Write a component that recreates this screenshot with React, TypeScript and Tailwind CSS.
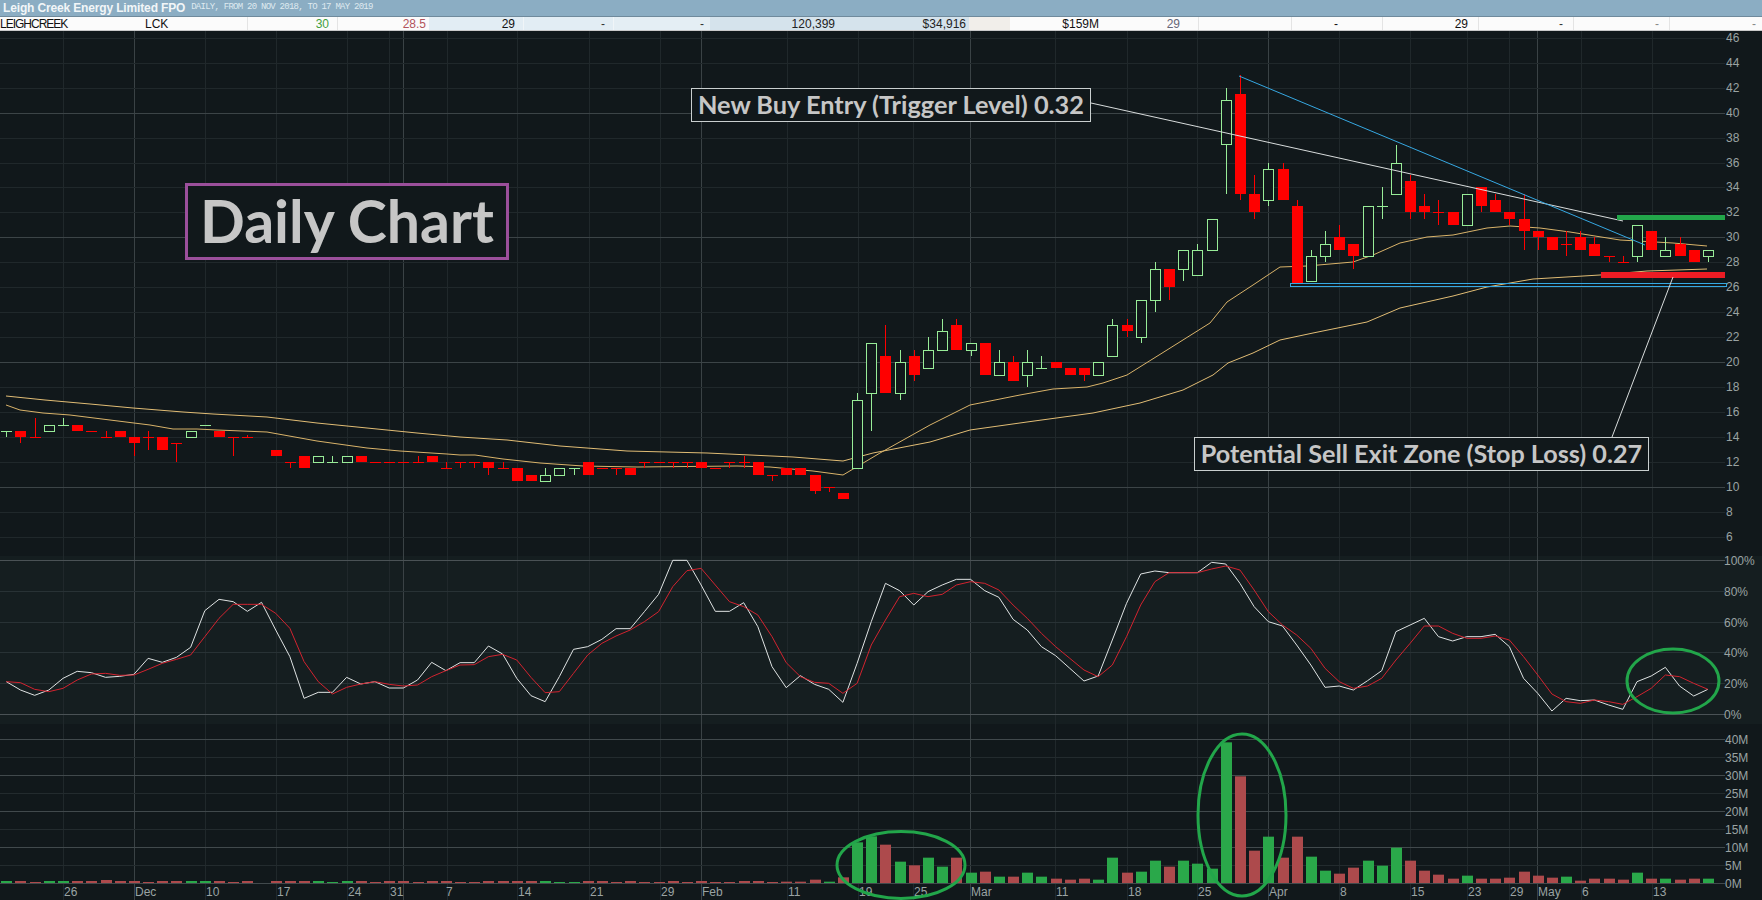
import React from 'react';

type Candle = { up: boolean; t: number; b: number; h: number; l: number } | null;

const g = (t: number, b: number, h = t, l = b): Candle => ({ up: true, t, b, h, l });
const r = (t: number, b: number, h = t, l = b): Candle => ({ up: false, t, b, h, l });

// top of body, bottom of body, high, low (in cents)
const candles: Candle[] = [
  g(14.5, 14.5, 14.5, 14), r(14.5, 14, 14.5, 13.5), r(14, 14, 15.5, 14), g(15, 14.5), g(15, 15, 15.5, 15), r(15, 14.5),
  r(14.5, 14.5), r(14, 14, 14.5, 14), r(14.5, 14), r(14, 13.5, 14, 12.5), r(14, 14, 14.5, 13), r(14, 13),
  r(13.5, 13.5, 13.5, 12), g(14.5, 14), g(15, 15), r(14.5, 14), r(14, 14, 14, 12.5), r(14, 14, 14.2, 14),
  null, r(13, 12.5), r(12, 12, 12, 11.5), r(12.5, 11.5), g(12.5, 12), g(12, 12, 12.5, 12),
  g(12.5, 12), r(12.5, 12), r(12, 12), r(12, 12), r(12, 12), r(12, 12, 12.5, 12),
  r(12.5, 12), r(11.5, 11.5, 12, 11.5), r(12, 12, 12, 11.5), r(12, 12, 12, 11.5), r(12, 11.5, 12, 11), r(11.5, 11.5, 12, 11.5),
  r(11.5, 10.5), r(11, 10.5), g(11, 10.5, 11.5, 10.5), g(11.5, 11), g(11.5, 11.5, 11.5, 11), r(12, 11),
  r(11.5, 11.5), r(11.5, 11.5, 11.5, 11), r(11.5, 11), r(12, 12, 12, 11.5), r(12, 12), r(12, 12, 12, 11.5),
  r(12, 12, 12, 11.5), r(12, 11.5), r(11.5, 11.5), r(12, 12, 12, 11.5), r(12, 12, 12.5, 11.5), r(12, 11),
  r(11, 11, 11, 10.5), r(11.5, 11), r(11.5, 11), r(11, 9.7, 11, 9.4), r(10, 10, 10, 9.6), r(9.5, 9),
  g(17, 11.5, 17.5, 11.5), g(21.5, 17.5, 21.5, 14.5), r(20.5, 17.5, 23, 17.5), g(20, 17.5, 21, 17), r(20.5, 19, 21, 18.5), g(21, 19.5, 22, 19.5),
  g(22.5, 21, 23.5, 21), r(23, 21, 23.5, 21), g(21.5, 21, 21.5, 20.5), r(21.5, 19), g(20, 19, 21, 19), r(20, 18.5, 20.5, 18.5),
  g(20, 19, 21, 18), g(19.5, 19.5, 20.5, 19.5), r(20, 19.5), r(19.5, 19), r(19.5, 19, 19.5, 18.5), g(20, 19),
  g(23, 20.5, 23.5, 20.5), r(23, 22.5, 23.5, 22), g(25, 22, 25, 21.5), g(27.5, 25, 28, 24), r(27.5, 26, 27.5, 25), g(29, 27.5, 29, 26.5),
  g(29, 27, 29.5, 27), g(31.5, 29), g(41, 37.5, 42, 33.5), r(41.5, 33.5, 43, 33), r(33.5, 32, 35, 31.5), g(35.5, 33, 36, 32.5),
  r(35.5, 33, 36, 33), r(32.5, 26.3, 33, 26.3), g(28.5, 26.5, 29, 26.5), g(29.5, 28.5, 30.5, 28), r(30, 29, 31, 29), r(29.5, 28.5, 29.5, 27.5),
  g(32.5, 28.5), g(32.5, 32.5, 34, 31.5), g(36, 33.5, 37.4, 33.5), r(34.5, 32, 35, 31.5), r(32.5, 32, 33.5, 31.5), r(32, 32, 33, 31),
  r(32, 31), g(33.5, 31), r(34, 32.5, 34, 32), r(33, 32, 33.5, 32), r(32, 31.5, 32, 31), r(31.5, 30.5, 33.5, 29),
  r(30.5, 30, 30.5, 29), r(30, 29), r(29.5, 29.5, 30.5, 28.5), r(30, 29, 30.5, 29), r(29.5, 28.5, 30, 28.5), r(28.5, 28.5, 28.5, 28),
  r(28, 28, 28.5, 28), g(31, 28.5, 31, 28), r(30.5, 29), g(29, 28.5, 30, 28.5), r(29.5, 28.5, 30, 28.5), r(29, 28),
  g(29, 28.5, 29, 28),
];

const cx = (i: number) => Math.round(6.3 + 14.18 * i);
const py = (p: number) => Math.round(487 - (p - 10) * 12.48);

const slowMA: [number, number][] = [
  [6, 396], [45, 400], [90, 404], [133, 408], [183, 412], [213, 414], [267, 417], [317, 423], [367, 428], [417, 433],
  [460, 437], [507, 440], [560, 446], [627, 451], [707, 453], [793, 457], [843, 461], [873, 453], [930, 442], [970, 430],
  [1027, 422], [1093, 413], [1140, 403], [1183, 390], [1213, 375], [1228, 363], [1253, 353], [1280, 340], [1313, 333],
  [1367, 322], [1400, 308], [1453, 296], [1487, 287], [1533, 279], [1600, 275], [1647, 271], [1707, 269],
];
const fastMA: [number, number][] = [
  [6, 405], [20, 410], [43, 413], [70, 415], [110, 420], [150, 425], [173, 429], [197, 429], [217, 430], [267, 432],
  [317, 441], [367, 448], [400, 451], [447, 454], [460, 455], [475, 455], [503, 459], [540, 463], [583, 466], [637, 467],
  [737, 466], [770, 467], [813, 471], [843, 475], [880, 453], [930, 425], [970, 405], [1020, 395], [1053, 389], [1087, 387],
  [1103, 383], [1127, 375], [1167, 350], [1210, 323], [1227, 302], [1253, 285], [1280, 267], [1307, 266], [1353, 262],
  [1373, 255], [1400, 243], [1427, 237], [1453, 235], [1487, 228], [1510, 226], [1540, 228], [1570, 232], [1620, 240],
  [1673, 243], [1707, 246],
];

// stochastic pane, raw offsets below y=550 (x3)
const stochK = [
  395, 420, 436, 420, 385, 364, 368, 382, 379, 373, 325, 337, 322, 292, 182, 148, 155, 184, 157, 240, 320, 445, 427, 427, 382,
  402, 395, 414, 414, 390, 337, 362, 338, 338, 288, 312, 385, 437, 455, 380, 298, 290, 268, 236, 236, 185, 133, 31, 31, 105,
  184, 184, 158, 230, 350, 413, 377, 403, 418, 457, 340, 215, 100, 122, 165, 125, 105, 88, 88, 122, 142, 208, 240, 290, 317,
  355, 393, 378, 270, 160, 72, 63, 68, 68, 68, 37, 42, 100, 170, 215, 228, 285, 345, 412, 408, 420, 392, 362, 245, 225, 205,
  260, 273, 260, 260, 253, 290, 385, 430, 483, 445, 452, 450, 465, 478, 395, 378, 352, 408, 438, 418,
];
const stochD = [
  395, 398, 418, 425, 415, 390, 372, 370, 376, 375, 358, 340, 328, 315, 260, 205, 163, 163, 163, 190, 235, 335, 395, 432, 412,
  402, 395, 403, 408, 405, 380, 362, 345, 344, 320, 313, 330, 382, 428, 425, 370, 315, 280, 258, 240, 215, 185, 110, 62, 55,
  105, 155, 170, 195, 260, 338, 380, 397, 400, 430, 400, 285, 210, 140, 130, 140, 133, 105, 95, 100, 120, 165, 205, 250, 290,
  325, 360, 380, 345, 260, 165, 95, 68, 68, 68, 57, 48, 60, 120, 185, 225, 255, 295, 355, 395, 415, 408, 385, 330, 280, 228,
  228, 250, 265, 265, 258, 270, 320, 375, 432, 455, 460, 450, 455, 463, 440, 415, 375, 380, 400, 418,
];

// volume: first 55 bars are px heights, the rest are read off as bar tops (x3)
const lowVol = [
  2, 2, 1, 2, 2, 2, 2, 3, 2, 2, 1, 2, 2, 2, 2, 2, 1, 2, 0, 2, 2, 2, 2, 1, 2, 2, 1, 2, 2, 1, 2, 2, 1, 1, 2, 2, 2, 2, 2, 1, 1, 2,
  2, 1, 2, 1, 1, 2, 1, 2, 1, 1, 2, 2, 1,
];
const volTops = [
  486, 486, 480, 486, 473, 368, 350, 375, 426, 437, 414, 441, 414, 459, 456, 471, 471, 459, 471, 477, 480, 477, 480, 414, 459,
  456, 423, 441, 423, 432, 447, 68, 170, 393, 351, 414, 351, 411, 453, 462, 444, 423, 438, 384, 423, 453, 465, 477, 468, 477,
  477, 474, 456, 468, 474, 471, 483, 477, 477, 480, 459, 477, 477, 480, 477, 477,
];
const volHeights = [...lowVol, ...volTops.map((t) => (490 - t) / 3)];
const volUp = (i: number) => {
  if (i === 58 || i === 77 || i === 85 || i === 110) return true;
  if (i === 59 || i === 67 || i === 90 || i === 91) return false;
  if (i === 55 || i === 56 || i === 57 || i === 66) return i === 66;
  return candles[i]?.up ?? false;
};

const majorX = [134.5, 403.5, 701.5, 970.5, 1268.5, 1537.5];
const minorX = [63.5, 205.5, 276.5, 347.5, 389.5, 447.5, 517.5, 589.5, 660.5, 787.5, 858.5, 913.5, 1055.5, 1127.5, 1197.5, 1339.5, 1410.5, 1467.5, 1509.5, 1581.5, 1652.5];

const dates: [string, number][] = [
  ['26', 63], ['Dec', 134], ['10', 205], ['17', 276], ['24', 347], ['31', 389], ['7', 445], ['14', 517], ['21', 589], ['29', 660],
  ['Feb', 701], ['11', 787], ['19', 858], ['25', 913], ['Mar', 970], ['11', 1055], ['18', 1127], ['25', 1197], ['Apr', 1268],
  ['8', 1339], ['15', 1410], ['23', 1467], ['29', 1509], ['May', 1537], ['6', 1581], ['13', 1652],
];

const prices = Array.from({ length: 21 }, (_, i) => 46 - i * 2);
const pcts = [100, 80, 60, 40, 20, 0];
const vols = [40, 35, 30, 25, 20, 15, 10, 5, 0];
const sy = (s: number) => Math.round(714 - 1.54 * s) + 0.5;
const vy = (m: number) => Math.round(883 - 3.6 * m) + 0.5;

const toPts = (a: number[]) => a.map((v, i) => `${6.3 + 14.18 * i},${550 + v / 3}`).join(' ');
const maPts = (a: [number, number][]) => a.map((p) => p.join(',')).join(' ');

const cells = [
  { w: 145, text: 'LEIGHCREEK', cls: 'justify-start text-[11px] tracking-[-1px] text-[#111] bg-[#fbfbfb]' },
  { w: 103, text: 'LCK', cls: 'justify-start text-[#111] bg-[#fbfbfb] border-r border-[#e4e4e4]' },
  { w: 90, text: '30', cls: 'justify-end pr-[8px] text-[#3f9f3f] bg-[#fbfbfb] border-r border-[#e4e4e4]' },
  { w: 91, text: '28.5', cls: 'justify-end pr-[3px] text-[#b2545c] bg-[#fbfbfb]' },
  { w: 95, text: '29', cls: 'justify-end pr-[8px] text-[#111] bg-[#e2edf4] border-r border-[#f0f5f8]' },
  { w: 90, text: '-', cls: 'justify-end pr-[8px] text-[#333] bg-[#e2edf4] border-r border-[#f0f5f8]' },
  { w: 96, text: '-', cls: 'justify-end pr-[6px] text-[#333] bg-[#e4eef4]' },
  { w: 135, text: '120,399', cls: 'justify-end pr-[10px] text-[#222] bg-[#d5e3ec]' },
  { w: 124, text: '$34,916', cls: 'justify-end pr-[3px] text-[#222] bg-[#d5e3ec]' },
  { w: 41, text: '', cls: 'bg-[#f1eeea]' },
  { w: 100, text: '$159M', cls: 'justify-end pr-[11px] text-[#111] bg-[#fbfbfb]' },
  { w: 89, text: '29', cls: 'justify-end pr-[18px] text-[#667] bg-[#fbfbfb] border-r border-[#e4e4e4]' },
  { w: 93, text: '', cls: 'bg-[#fbfbfb] border-r border-[#e4e4e4]' },
  { w: 91, text: '-', cls: 'justify-end pr-[44px] text-[#111] bg-[#fbfbfb] border-r border-[#e4e4e4]' },
  { w: 96, text: '29', cls: 'justify-end pr-[10px] text-[#111] bg-[#fbfbfb] border-r border-[#e4e4e4]' },
  { w: 95, text: '-', cls: 'justify-end pr-[10px] text-[#333] bg-[#fbfbfb] border-r border-[#e4e4e4]' },
  { w: 96, text: '-', cls: 'justify-end pr-[10px] text-[#888] bg-[#fbfbfb] border-r border-[#e4e4e4]' },
  { w: 92, text: '-', cls: 'justify-end pr-[6px] text-[#888] bg-[#fbfbfb]' },
];

const Note: React.FC<{ className: string; children: React.ReactNode }> = ({ className, children }) => (
  <div
    className={`absolute flex items-center justify-center border border-[#c9cfcf] bg-[#11181b] text-[#c6c6c6] font-bold [font-family:Lato,sans-serif] whitespace-nowrap ${className}`}
  >
    {children}
  </div>
);

const App: React.FC = () => {
  return (
    <div className="flex flex-col w-[1762px] h-[900px] overflow-hidden bg-[#11181b] [font-family:'Liberation_Sans',sans-serif]">
      <div className="flex items-center gap-[6px] h-[17px] pl-[3px] bg-[#8badc3] border-b border-[#6f8a9c]">
        <span className="text-[12px] tracking-[-0.15px] font-bold text-[#f2f6f8]">Leigh Creek Energy Limited FPO</span>
        <span className="text-[9px] tracking-[-0.75px] text-[#dfeaf0] [font-family:'Liberation_Mono',monospace]">DAILY, FROM 20 NOV 2018, TO 17 MAY 2019</span>
      </div>

      <div className="flex h-[14px] border-b border-[#c9c9c9]">
        {cells.map((c, i) => (
          <div key={i} style={{ width: c.w }} className={`flex items-center shrink-0 text-[12px] leading-none ${c.cls}`}>
            {c.text}
          </div>
        ))}
      </div>

      <div className="relative flex-1">
        <svg width={1762} height={869} viewBox="0 31 1762 869" className="block">
          {/* stochastic pane is a touch lighter */}
          <rect x={0} y={556} width={1762} height={168} fill="#151e20" />

          {/* grid */}
          {minorX.map((x) => (
            <line key={x} x1={x} x2={x} y1={31} y2={900} stroke="#20282b" />
          ))}
          {majorX.map((x) => (
            <line key={x} x1={x} x2={x} y1={31} y2={900} stroke="#3a4245" />
          ))}
          {prices.map((p) => (
            <line key={p} x1={0} x2={1725} y1={py(p) + 0.5} y2={py(p) + 0.5} stroke={p % 10 === 0 ? '#3c4447' : '#20282b'} />
          ))}
          {pcts.map((s) => (
            <line key={s} x1={0} x2={1725} y1={sy(s)} y2={sy(s)} stroke={s % 100 === 0 ? '#4a5255' : '#283235'} />
          ))}
          {vols.map((m) => (
            <line key={m} x1={0} x2={1725} y1={vy(m)} y2={vy(m)} stroke={m % 10 === 0 ? '#41494c' : '#232b2e'} />
          ))}

          {/* moving averages */}
          <polyline points={maPts(slowMA)} fill="none" stroke="#e2bd75" strokeWidth={1} />
          <polyline points={maPts(fastMA)} fill="none" stroke="#d9b36a" strokeWidth={1} />

          {/* candles */}
          {candles.map((c, i) => {
            if (!c) return null;
            const x = cx(i) + 0.5;
            const col = c.up ? '#98ec98' : '#ff0000';
            const top = py(c.t);
            const bot = py(c.b);
            return (
              <g key={i}>
                <line x1={x} x2={x} y1={py(c.h)} y2={py(c.l)} stroke={col} />
                {top === bot ? (
                  <line x1={x - 5.5} x2={x + 5.5} y1={top + 0.5} y2={top + 0.5} stroke={col} />
                ) : c.up ? (
                  <rect x={x - 5} y={top + 0.5} width={10} height={bot - top} fill="#11181b" stroke={col} />
                ) : (
                  <rect x={x - 5.5} y={top} width={11} height={bot - top} fill={col} />
                )}
              </g>
            );
          })}

          {/* trend lines and levels */}
          <line x1={1091} y1={103} x2={1623} y2={221} stroke="#d8dcdc" />
          <line x1={1239} y1={76} x2={1645} y2={245} stroke="#36a8e2" />
          <rect x={1290.5} y={283.5} width={436} height={3} fill="none" stroke="#36a8e2" />
          <rect x={1617} y={215} width={108} height={5} fill="#22a64a" />
          <rect x={1601} y={272} width={124} height={6} fill="#ed1c24" />
          <line x1={1612} y1={437} x2={1673} y2={277} stroke="#d8dcdc" />

          {/* stochastic */}
          <polyline points={toPts(stochK)} fill="none" stroke="#dfe3e3" />
          <polyline points={toPts(stochD)} fill="none" stroke="#d2232f" />
          <ellipse cx={1673} cy={681} rx={46} ry={32} fill="none" stroke="#22a64a" strokeWidth={3} />

          {/* volume */}
          {volHeights.map((h, i) => (
            <rect key={i} x={cx(i) - 5} y={883 - h} width={11} height={h} fill={volUp(i) ? '#2aa84a' : '#ad4a4c'} />
          ))}

          {/* axis labels */}
          <g className="text-[12px] fill-[#9aa3a3]">
            {prices.map((p) => (
              <text key={p} x={1726} y={py(p) + 4}>{p}</text>
            ))}
            {pcts.map((s) => (
              <text key={s} x={1724} y={sy(s) + 4}>{s}%</text>
            ))}
            {vols.map((m) => (
              <text key={m} x={1725} y={vy(m) + 4}>{m}M</text>
            ))}
            {dates.map(([d, x], i) => (
              <text key={i} x={x + 1} y={896} textAnchor="start">{d}</text>
            ))}
          </g>

          <ellipse cx={901} cy={865} rx={64} ry={33.5} fill="none" stroke="#22a64a" strokeWidth={3} />
          <ellipse cx={1242} cy={815} rx={44} ry={81} fill="none" stroke="#22a64a" strokeWidth={3} />
        </svg>

        {/* chart annotations */}
        <Note className="left-[691px] top-[57px] w-[400px] h-[34px] text-[25.3px]">New Buy Entry (Trigger Level) 0.32</Note>
        <Note className="left-[1194px] top-[406px] w-[455px] h-[34px] text-[25.2px]">Potential Sell Exit Zone (Stop Loss) 0.27</Note>
        <Note className="left-[185px] top-[152px] w-[324px] h-[77px] text-[59px] !border-[3px] !border-[#9b4f9b]">Daily Chart</Note>
      </div>
    </div>
  );
};

export default App;
